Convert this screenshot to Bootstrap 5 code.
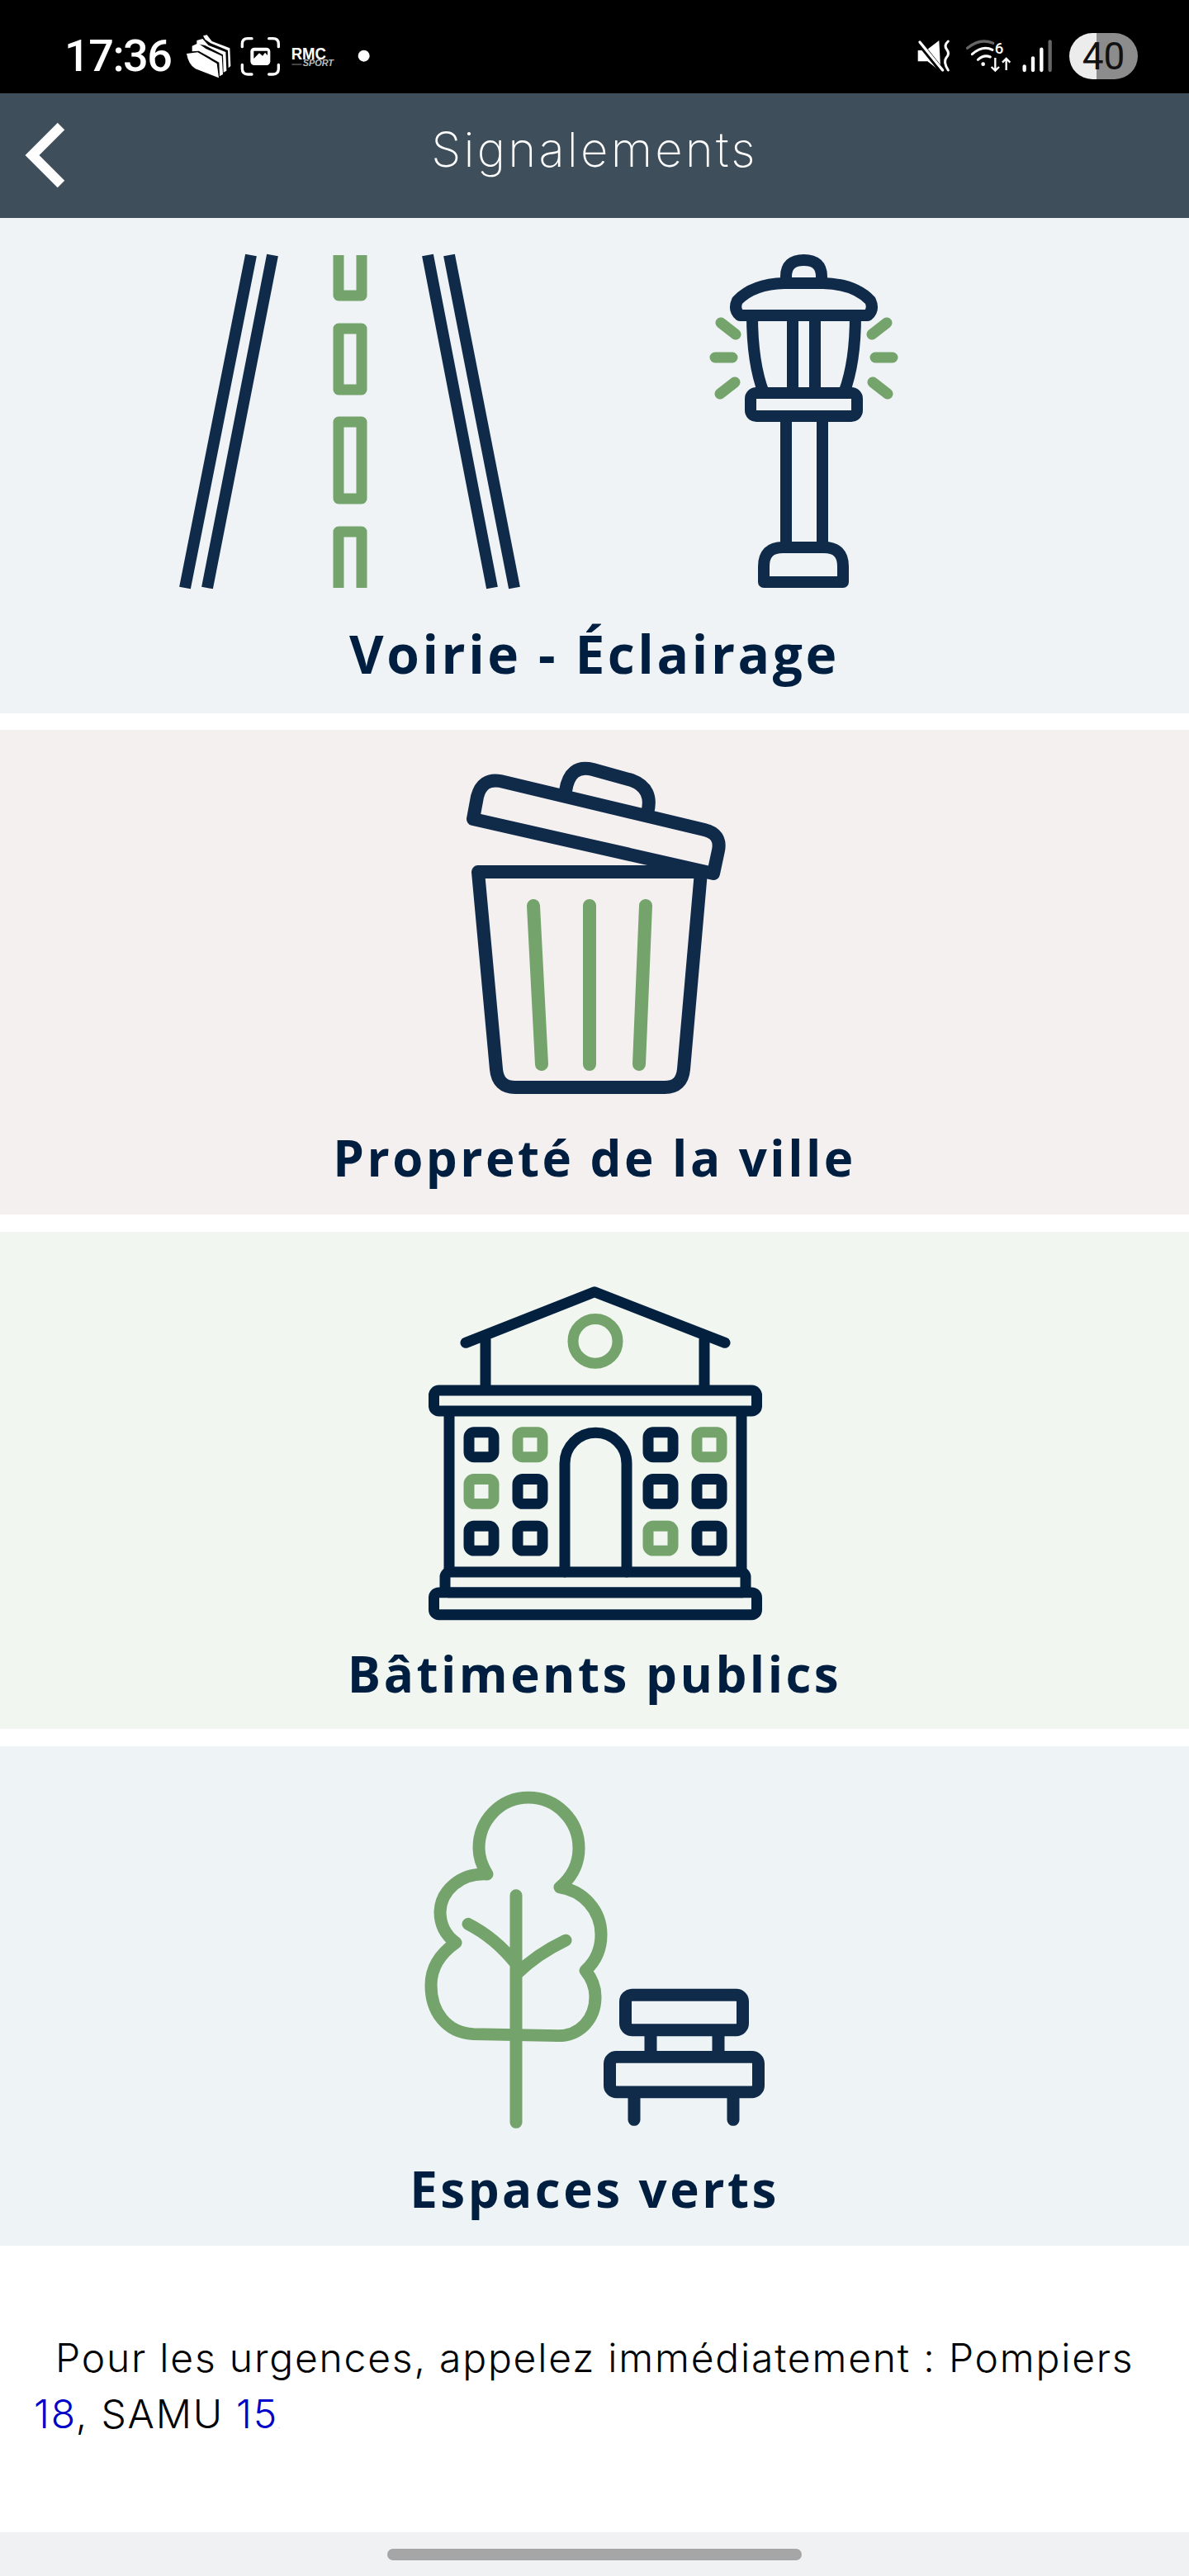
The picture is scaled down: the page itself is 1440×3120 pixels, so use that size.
<!DOCTYPE html>
<html lang="fr">
<head>
  <meta charset="UTF-8">
  <meta name="viewport" content="width=device-width, initial-scale=1">
  <title>Signalements</title>
  <link href="https://cdn.jsdelivr.net/npm/bootstrap@5.3.2/dist/css/bootstrap.min.css" rel="stylesheet">
  <style>
    body { background-color: #fff; font-family: "Inter", "Liberation Sans", sans-serif; }
    .status-strip { height: 113px; background: #000; padding: 35px 0 0 78px; }
    .status-time { width: 142px; font: 500 54px/65px "Roboto", sans-serif; letter-spacing: -1.5px; color: #fff; }
    .status-fill { flex: 1; }
    .battery-pill { width: 83px; height: 56px; margin: 5px 62px 0 5px; border-radius: 28px; background: linear-gradient(90deg, #ececec 40%, #8c8c8c 40%); color: #111; font: 400 46px/56px "Roboto", sans-serif; text-align: center; }
    .top-bar { height: 151px; background: #3e4f5b; padding: 0; }
    .top-back { left: 0; top: 0; }
    .top-title { font-weight: 200; font-size: 58px; line-height: 120px; letter-spacing: 3.2px; margin-bottom: 15px; color: #fff; }
    .tile { display: block; text-decoration: none; overflow: hidden; }
    .tile-road { height: 600px; background: #eff3f6; margin-bottom: 20px; }
    .tile-bin { height: 587px; background: #f5f0f0; margin-bottom: 21px; }
    .tile-hall { height: 602px; background: #f1f6f0; margin-bottom: 21px; }
    .tile-park { height: 605px; background: #eef3f6; }
    .tile-label { font: 700 60px/70px "Open Sans", sans-serif; letter-spacing: 3.5px; color: #001f40; text-align: center; }
    .tile-road .tile-label { font-size: 64px; letter-spacing: 3.6px; }
    .ink { fill: none; stroke: #102a49; stroke-width: 14; stroke-linejoin: round; }
    .ink-bin { stroke-width: 16; }
    .ink-park { stroke-width: 15; }
    .ink-hall { fill: none; stroke: #03203f; stroke-width: 13; stroke-linejoin: round; stroke-linecap: round; }
    .leaf { fill: none; stroke: #74a36b; stroke-width: 13; stroke-linejoin: round; }
    .leaf-bin { stroke-width: 16; }
    .leaf-park { stroke-width: 15; }
    .round-cap { stroke-linecap: round; }
    .notice { height: 347px; padding: 102px 30px 0 41px; font-weight: 300; font-size: 48px; line-height: 68px; letter-spacing: 1.8px; color: #000; text-indent: 26px; }
    .notice a { color: #0000c8; text-decoration: none; }
    .notice-dot { font-size: 8px; color: #777; }
    .home-strip { height: 53px; background: #f0f1f3; padding-top: 20px; }
    .home-pill { width: 502px; height: 14px; background: #a6a6a6; border-radius: 7px; }
  </style>
</head>
<body>

<div class="status-strip d-flex align-items-start">
  <div class="status-time">17:36</div>
  <svg width="240" height="65" viewBox="0 0 720 195" class="d-block">
    <path fill="#fff" d="M78 25 92 22 110 45 175 70 178 135 170 142 168 78 105 52 85 38Z"/>
    <path fill="#fff" d="M55 42 76 36 98 60 160 84 163 152 152 158 150 94 85 60 55 54Z"/>
    <path fill="#fff" d="M38 62 60 52 88 72 146 98 150 165 138 172 136 122 62 80 38 82Z"/>
    <path fill="#fff" d="M18 90 58 85 128 126 135 178 50 145Q25 130 18 90Z"/>
    <path fill="none" stroke="#fff" stroke-width="10" stroke-linecap="round" d="M255 35H240Q220 35 220 55V65M317 35H332Q352 35 352 55V65M220 130V145Q220 165 240 165H255M352 130V145Q352 165 332 165H317"/>
    <rect x="250" y="68" width="72" height="64" rx="14" fill="#fff"/>
    <path fill="#000" d="M262 108 282 88 294 98 303 86 312 96V80H262Z"/>
    <text x="398" y="112" textLength="127" lengthAdjust="spacingAndGlyphs" font-family="Liberation Sans, sans-serif" font-weight="700" font-size="60" fill="#fff">RMC</text>
    <text x="440" y="136" textLength="112" lengthAdjust="spacingAndGlyphs" font-family="Liberation Sans, sans-serif" font-weight="700" font-style="italic" font-size="30" fill="#bbb">SPORT</text>
    <path stroke="#888" stroke-width="3" d="M400 129H436"/>
    <circle cx="662" cy="98" r="21" fill="#fff"/>
  </svg>
  <div class="status-fill"></div>
  <svg width="190" height="65" viewBox="0 0 570 195" class="d-block">
    <path fill="#fff" d="M35 78H65L112 42 118 155 70 118H35Z"/>
    <path stroke="#000" stroke-width="20" d="M30 38 128 160"/>
    <path stroke="#fff" stroke-width="10" stroke-linecap="round" d="M42 48 125 150"/>
    <path fill="none" stroke="#fff" stroke-width="9" stroke-linecap="round" d="M145 45Q128 60 140 75 152 90 138 105 126 120 145 150"/>
    <path fill="none" stroke="#666" stroke-width="10" stroke-linecap="round" d="M215 70Q260 32 308 52"/>
    <path fill="none" stroke="#fff" stroke-width="9" stroke-linecap="round" d="M232 92Q270 58 306 76M253 112Q275 92 298 102"/>
    <circle cx="272" cy="128" r="7" fill="#fff"/>
    <text x="314" y="90" font-family="Roboto, sans-serif" font-weight="500" font-size="56" fill="#fff">6</text>
    <path fill="none" stroke="#fff" stroke-width="7" d="M316 105V152M302 138 316 152 330 138M356 150V108M342 122 356 108 370 122"/>
    <path stroke="#fff" stroke-width="13" stroke-linecap="round" d="M422 136V150M453 106V150M484 74V150"/>
    <path stroke="#666" stroke-width="13" stroke-linecap="round" d="M515 46V150"/>
  </svg>
  <div class="battery-pill">40</div>
</div>

<nav class="navbar top-bar position-relative justify-content-center">
  <a href="#" class="top-back position-absolute" aria-label="Retour">
    <svg width="100" height="151" viewBox="0 113 100 151" class="d-block"><path fill="none" stroke="#fff" stroke-width="12" d="M74 153 39 188 74 223"/></svg>
  </a>
  <span class="top-title">Signalements</span>
</nav>

<a href="#" class="tile tile-road">
  <svg viewBox="0 264 1440 493" class="d-block w-100">
    <g class="ink">
      <path d="M304 309 224 712M330 309 251 712M518 309 596 712M544 309 623 712"/>
      <path d="M952 340V335Q952 315 973.500 315 995 315 995 335V340"/>
      <path d="M896 382Q888 375 893 364 912 344 950 343H997Q1035 344 1054 364 1059 375 1051 382Z"/>
      <path d="M960 382H911C911 420 915 450 925 476H960ZM987 382H1036C1036 420 1032 450 1022 476H987Z"/>
      <rect x="909" y="476" width="129" height="28" rx="7"/>
      <path d="M952 504V660M996 504V660"/>
      <path d="M925 705V686Q925 663 948 663H998Q1021 663 1021 686V705Z"/>
    </g>
    <g class="leaf">
      <path d="M410 309V358H438V309M410 398H438V472H410ZM410 511H438V604H410ZM410 712V644H438V712"/>
      <path class="round-cap" d="M873 391 891 405M866 433H887M872 477 890 463M1074 391 1056 405M1081 433H1060M1075 477 1057 463"/>
    </g>
  </svg>
  <div class="tile-label">Voirie - Éclairage</div>
</a>

<a href="#" class="tile tile-bin">
  <svg viewBox="0 884 1440 483" class="d-block w-100">
    <g class="ink ink-bin">
      <path d="M579 1056H849L828 1295Q826 1317 805 1317H624Q603 1317 601 1295Z"/>
      <path d="M573 992 578 965Q584 942 606 946L853 1005Q874 1010 870 1030L864 1058Z"/>
      <path d="M685 958Q690 925 718 932L765 945Q792 955 784 985"/>
    </g>
    <path class="leaf leaf-bin round-cap" d="M646 1097 656 1289M714 1097V1289M782 1097 774 1289"/>
  </svg>
  <div class="tile-label">Propreté de la ville</div>
</a>

<a href="#" class="tile tile-hall">
  <svg viewBox="0 1492 1440 500" class="d-block w-100">
    <g transform="translate(0 7.500) scale(1 .995)">
      <g class="ink-hall">
        <path d="M564 1627 720 1565 878 1627M588 1623V1679M853 1623V1679"/>
        <rect x="525.500" y="1685" width="391" height="25" rx="6"/>
        <path d="M544 1716V1904M898 1716V1904"/>
        <rect x="539" y="1906" width="364" height="25" rx="6"/>
        <rect x="525.500" y="1931" width="391" height="27" rx="6"/>
        <path d="M684 1906V1774A37 37 0 0 1 759 1774V1906"/>
        <rect x="568" y="1736" width="30" height="30" rx="6"/>
        <rect x="785" y="1736" width="30" height="30" rx="6"/>
        <rect x="627" y="1793" width="30" height="30" rx="6"/>
        <rect x="785" y="1793" width="30" height="30" rx="6"/>
        <rect x="844" y="1793" width="30" height="30" rx="6"/>
        <rect x="568" y="1850" width="30" height="30" rx="6"/>
        <rect x="627" y="1850" width="30" height="30" rx="6"/>
        <rect x="844" y="1850" width="30" height="30" rx="6"/>
      </g>
      <g class="leaf">
        <circle cx="721" cy="1625" r="27"/>
        <rect x="627" y="1736" width="30" height="30" rx="6"/>
        <rect x="844" y="1736" width="30" height="30" rx="6"/>
        <rect x="568" y="1793" width="30" height="30" rx="6"/>
        <rect x="785" y="1850" width="30" height="30" rx="6"/>
      </g>
    </g>
  </svg>
  <div class="tile-label">Bâtiments publics</div>
</a>

<a href="#" class="tile tile-park">
  <svg viewBox="0 2115 1440 501" class="d-block w-100">
    <g transform="translate(0 25.300) scale(1 .988)">
      <g class="leaf leaf-park round-cap">
        <path d="M573 2468C540 2466 522 2440 522 2408 522 2385 535 2368 552 2356 540 2347 533 2335 533 2318 534 2292 558 2270 590 2272 584 2262 580 2252 580 2240 580 2206 606 2178 640 2178 674 2178 701 2206 701 2240 701 2260 692 2276 678 2288 706 2292 728 2316 728 2346 728 2366 720 2380 709 2390 717 2400 721 2410 721 2422 721 2450 702 2470 676 2470Z"/>
        <path d="M625 2298V2576M567 2333Q600 2350 625 2382M685 2353Q650 2370 626 2394"/>
      </g>
      <g class="ink ink-park round-cap">
        <rect x="757.500" y="2420" width="142" height="43" rx="8"/>
        <rect x="738.500" y="2496" width="180" height="43" rx="8"/>
        <path d="M788 2470V2490M870 2470V2490M768 2547V2573M888 2547V2573"/>
      </g>
    </g>
  </svg>
  <div class="tile-label">Espaces verts</div>
</a>

<p class="notice m-0">Pour les urgences, appelez immédiatement : Pompiers <a href="#">18</a>, SAMU <a href="#">15</a><span class="notice-dot">.</span></p>

<div class="home-strip d-flex justify-content-center">
  <div class="home-pill"></div>
</div>

<script src="https://cdn.jsdelivr.net/npm/bootstrap@5.3.2/dist/js/bootstrap.bundle.min.js"></script>
</body>
</html>
